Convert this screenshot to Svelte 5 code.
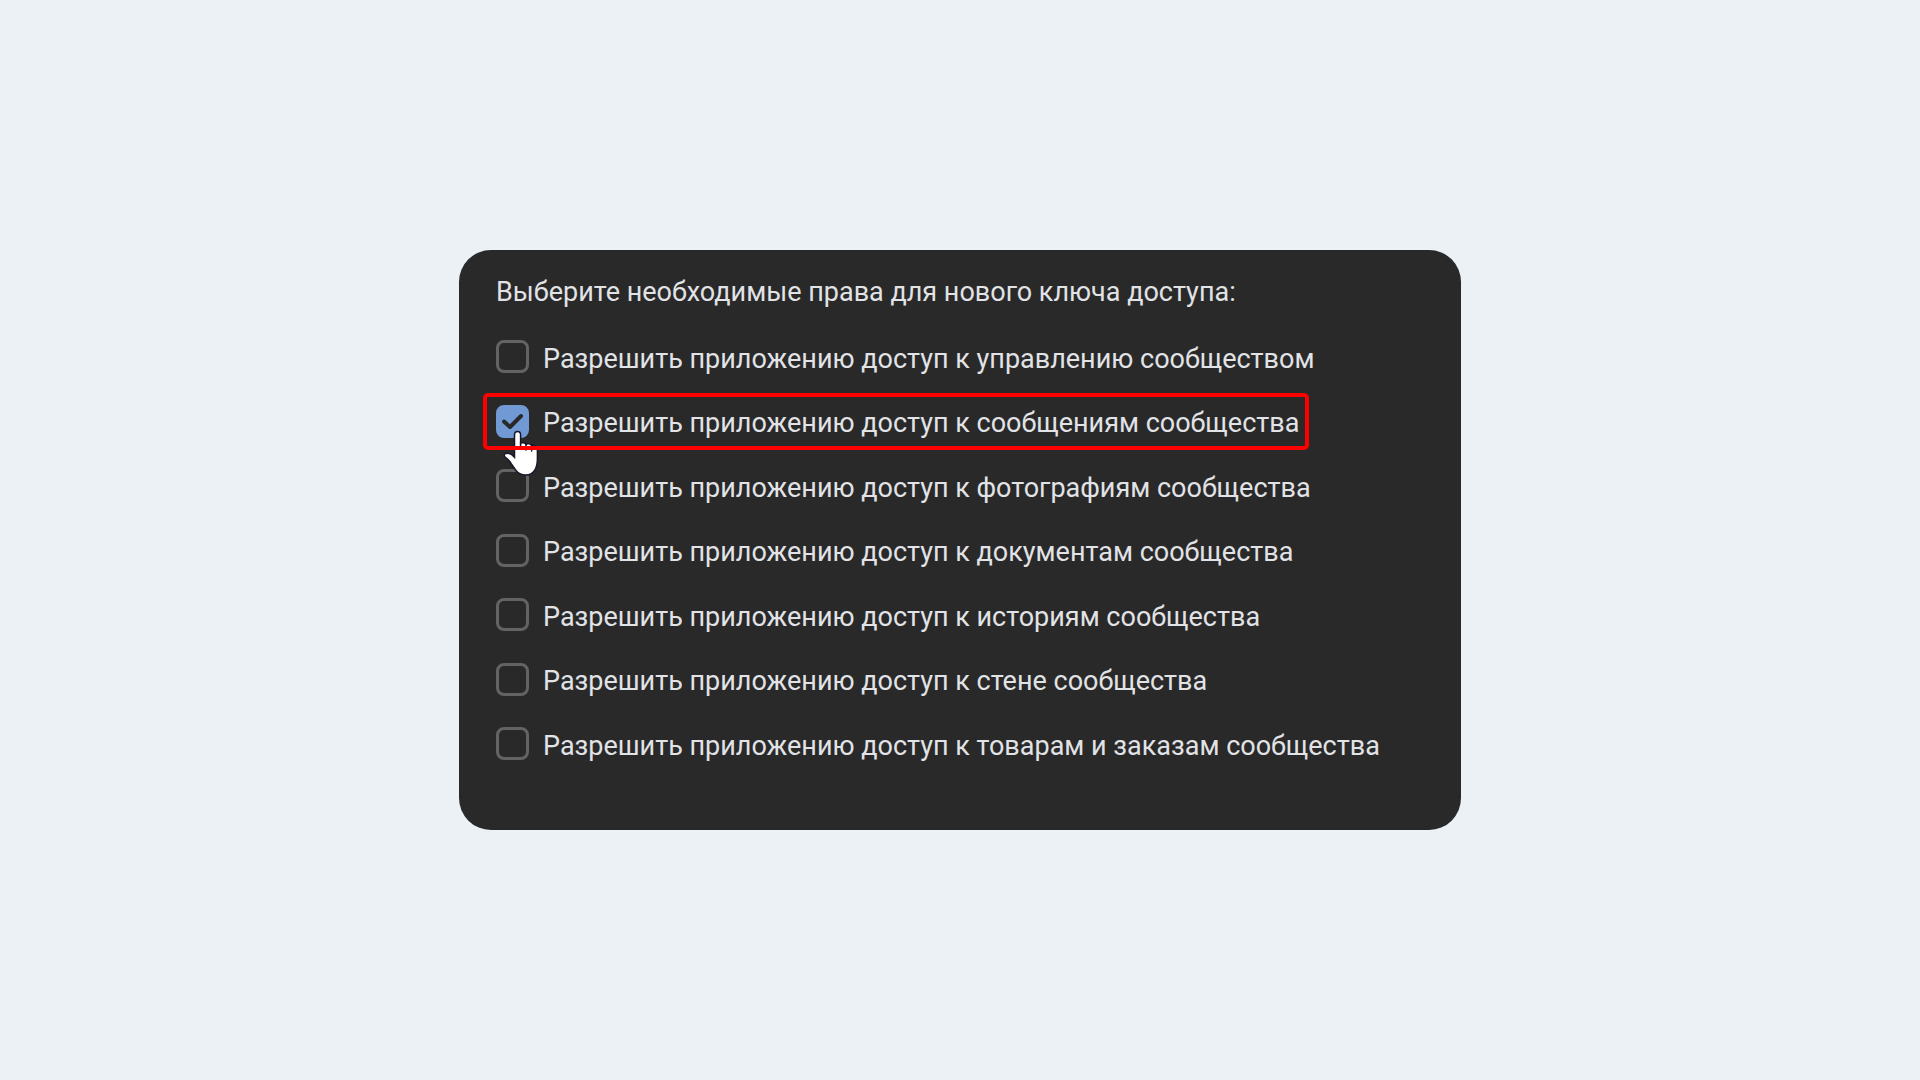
<script lang="ts">
  let permissions = $state([
    { id: "manage", target: "управлению сообществом", checked: false },
    { id: "messages", target: "сообщениям сообщества", checked: true },
    { id: "photos", target: "фотографиям сообщества", checked: false },
    { id: "docs", target: "документам сообщества", checked: false },
    { id: "stories", target: "историям сообщества", checked: false },
    { id: "wall", target: "стене сообщества", checked: false },
    { id: "market", target: "товарам и заказам сообщества", checked: false },
  ]);

  const highlighted = "messages";
</script>

<main class="page">
  <form class="card">
    <fieldset class="permissions">
      <legend class="title">Выберите необходимые права для нового ключа доступа:</legend>

      <div class="list">
        {#each permissions as item (item.id)}
          <div class="row" class:highlighted={item.id === highlighted}>
            <span class="box">
              <input type="checkbox" id={item.id} bind:checked={item.checked} />
              <svg class="tick" viewBox="0 0 33 33" aria-hidden="true">
                <path d="M8 16.5L14 22L25 11" />
              </svg>
            </span>
            <label for={item.id}>Разрешить приложению доступ к {item.target}</label>

            {#if item.id === highlighted}
              <svg class="pointer" viewBox="0 0 37 47" aria-hidden="true">
                <path
                  d="M12.5 5C12.5 2.8 13.8 1.5 15.6 1.5C17.4 1.5 18.6 2.8 18.6 5V13.2C20.4 12.2 23.2 12.8 24 14.4C25.8 13.2 28.8 13.8 29.6 15.6C32.4 14.6 35.4 16.2 35.4 19.4V29C35.4 34 34.8 37 32.6 40.4C30.6 43.6 27.8 45 23.6 45C19.2 45 16 43.4 13.6 40L9.4 33.8C7.6 31 5.6 29 3.4 27.4C1.4 25.8 2 23.8 4.2 23.4C7.2 22.8 10 24.4 12.5 27.2Z"
                />
                <path class="fingers" d="M18.6 12.5V19M24 14.5V20M29.6 15.5V21" />
              </svg>
              <span class="frame"></span>
            {/if}
          </div>
        {/each}
      </div>
    </fieldset>
  </form>
</main>

<style>
  :global(body) {
    margin: 0;
    background: #ebf1f4;
  }

  .page {
    display: flex;
    align-items: center;
    justify-content: center;
    min-height: 100vh;
    font-family: Roboto, "Noto Sans", sans-serif;
    font-size: 27px;
    line-height: 36px;
    color: #e1e3e6;
  }

  .card {
    box-sizing: border-box;
    width: 100%;
    max-width: 1002px;
    padding: 24px 37px 70px;
    border-radius: 32px;
    background: #292929;
  }

  .permissions {
    margin: 0;
    padding: 0;
    border: 0;
  }

  .title {
    padding: 0;
    margin-bottom: 30px;
  }

  .list {
    display: flex;
    flex-direction: column;
    align-items: flex-start;
    justify-content: space-between;
    min-height: 420px;
  }

  .row {
    display: flex;
    align-items: center;
    gap: 14px;
  }

  .highlighted {
    position: relative;
  }

  .box {
    display: grid;
    flex-shrink: 0;
    width: 33px;
    height: 33px;
  }

  .box input {
    grid-area: 1 / 1;
    box-sizing: border-box;
    width: 33px;
    height: 33px;
    margin: 0;
    appearance: none;
    border: 3px solid #636363;
    border-radius: 8px;
    cursor: pointer;
  }

  .box input:checked {
    border-color: #7199d3;
    background: #7199d3;
  }

  .tick {
    grid-area: 1 / 1;
    display: none;
    fill: none;
    stroke: #292929;
    stroke-width: 4;
    stroke-linecap: round;
    stroke-linejoin: round;
    pointer-events: none;
  }

  .box input:checked + .tick {
    display: block;
  }

  label {
    padding-top: 4px;
    line-height: 28px;
    cursor: pointer;
  }

  .frame {
    position: absolute;
    inset: -12px -10px -12px -13px;
    border: 4px solid #ff0000;
    border-radius: 5px;
    pointer-events: none;
  }

  .pointer {
    position: absolute;
    top: 25px;
    left: 6px;
    width: 37px;
    height: 47px;
    fill: #ffffff;
    stroke: #17172b;
    stroke-width: 1.5;
    pointer-events: none;
  }

  .fingers {
    fill: none;
    stroke-linecap: round;
  }
</style>
